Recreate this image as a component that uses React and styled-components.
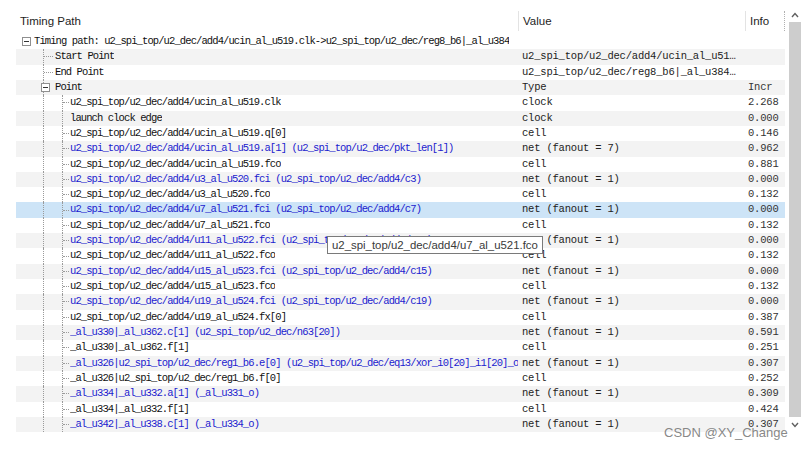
import React from "react";
import styled, { createGlobalStyle } from "styled-components";

const GlobalStyle = createGlobalStyle`
  html, body {
    margin: 0;
    background: #ffffff;
  }
`;

const ROW_H = 15.32;

const Page = styled.div`
  position: relative;
  width: 807px;
  height: 451px;
  padding: 7px 0 0 16px;
  box-sizing: border-box;
  display: flex;
  align-items: flex-start;
`;

const Table = styled.div`
  width: 769px;
  display: flex;
  flex-direction: column;
`;

const HeaderRow = styled.div`
  display: grid;
  grid-template-columns: 502px 227px 40px;
  height: 27px;
  align-items: center;
  font-family: "Liberation Sans", Arial, sans-serif;
  font-size: 11.5px;
  color: #1e1e1e;
`;

const HeaderCell = styled.div`
  height: 20px;
  display: flex;
  align-items: center;
  padding-left: 4px;
  border-left: ${(p) => (p.$first ? "none" : "1px solid #e3e3e3")};
  border-right: ${(p) => (p.$last ? "1px dotted #b0b0b0" : "none")};
  box-sizing: border-box;
`;

const Row = styled.div`
  display: grid;
  grid-template-columns: 502px 227px 40px;
  height: ${ROW_H}px;
  background: ${(p) =>
    p.$selected ? "#cde4f7" : p.$striped ? "#f3f3f3" : "#ffffff"};
  font-family: "Liberation Mono", "Courier New", monospace;
  font-size: 10.5px;
  line-height: ${ROW_H}px;
`;

const TreeCell = styled.div`
  display: flex;
  align-items: stretch;
  overflow: hidden;
  white-space: nowrap;
  padding-left: ${(p) => p.$pad || 0}px;
`;

const Lane = styled.span`
  flex: 0 0 ${(p) => p.$w}px;
  box-sizing: border-box;
  border-right: 1px dotted #9a9a9a;
`;

const Branch = styled.span`
  flex: 0 0 ${(p) => p.$w}px;
  align-self: center;
  height: 0;
  border-top: ${(p) => (p.$hidden ? "none" : "1px dotted #9a9a9a")};
`;

const Expander = styled.span`
  flex: 0 0 9px;
  height: 9px;
  align-self: center;
  box-sizing: border-box;
  border: 1px solid #8f8f8f;
  background: #ffffff;
  margin-left: ${(p) => p.$ml || 0}px;
  display: flex;
  align-items: center;
  justify-content: center;
  &::after {
    content: "";
    width: 5px;
    height: 1px;
    background: #333;
  }
`;

const Label = styled.span`
  margin-left: ${(p) => p.$ml}px;
  letter-spacing: -0.9px;
  color: ${(p) => (p.$blue ? "#1b1bcf" : "#111111")};
  overflow: hidden;
`;

const ValueCell = styled.div`
  padding-left: 4px;
  letter-spacing: -0.2px;
  color: #222222;
  overflow: hidden;
  white-space: nowrap;
`;

const InfoCell = styled.div`
  padding-left: 3px;
  letter-spacing: -0.2px;
  color: #333;
  overflow: hidden;
  white-space: nowrap;
`;

const ScrollTrack = styled.div`
  width: 16px;
  height: 425px;
  display: flex;
  flex-direction: column;
  align-items: center;
`;

const ScrollArrow = styled.div`
  height: 15px;
  width: 100%;
  display: flex;
  align-items: center;
  justify-content: center;
  padding-left: 4px;
  box-sizing: border-box;
`;

const Thumb = styled.div`
  flex: 1;
  width: 12px;
  margin-left: 4px;
  background: #cdcdcd;
`;

const Tooltip = styled.div`
  position: absolute;
  left: 327px;
  top: 236px;
  height: 16px;
  padding: 0 4px;
  border: 1px solid #7a7a7a;
  background: #ffffff;
  font-family: "Liberation Sans", Arial, sans-serif;
  font-size: 11.4px;
  line-height: 16px;
  color: #3a3a3a;
  white-space: nowrap;
`;

const Watermark = styled.div`
  position: absolute;
  left: 664px;
  top: 425px;
  font-family: "Liberation Sans", Arial, sans-serif;
  font-size: 13px;
  color: rgba(105, 105, 105, 0.8);
  white-space: nowrap;
`;

const rows = [
  { kind: "root", name: "Timing path: u2_spi_top/u2_dec/add4/ucin_al_u519.clk->u2_spi_top/u2_dec/reg8_b6|_al_u384" },
  { kind: "leaf1", name: "Start Point", value: "u2_spi_top/u2_dec/add4/ucin_al_u51…" },
  { kind: "leaf1", name: "End Point", value: "u2_spi_top/u2_dec/reg8_b6|_al_u384…" },
  { kind: "point", name: "Point", value: "Type", info: "Incr" },
  { name: "u2_spi_top/u2_dec/add4/ucin_al_u519.clk", value: "clock", info: "2.268" },
  { name: "launch clock edge", value: "clock", info: "0.000", noBranch: true },
  { name: "u2_spi_top/u2_dec/add4/ucin_al_u519.q[0]", value: "cell", info: "0.146" },
  { name: "u2_spi_top/u2_dec/add4/ucin_al_u519.a[1] (u2_spi_top/u2_dec/pkt_len[1])", value: "net (fanout = 7)", info: "0.962", blue: true },
  { name: "u2_spi_top/u2_dec/add4/ucin_al_u519.fco", value: "cell", info: "0.881" },
  { name: "u2_spi_top/u2_dec/add4/u3_al_u520.fci (u2_spi_top/u2_dec/add4/c3)", value: "net (fanout = 1)", info: "0.000", blue: true },
  { name: "u2_spi_top/u2_dec/add4/u3_al_u520.fco", value: "cell", info: "0.132" },
  { name: "u2_spi_top/u2_dec/add4/u7_al_u521.fci (u2_spi_top/u2_dec/add4/c7)", value: "net (fanout = 1)", info: "0.000", blue: true, selected: true },
  { name: "u2_spi_top/u2_dec/add4/u7_al_u521.fco", value: "cell", info: "0.132" },
  { name: "u2_spi_top/u2_dec/add4/u11_al_u522.fci (u2_spi_top/u2_dec/add4/c11)", value: "net (fanout = 1)", info: "0.000", blue: true },
  { name: "u2_spi_top/u2_dec/add4/u11_al_u522.fco", value: "cell", info: "0.132" },
  { name: "u2_spi_top/u2_dec/add4/u15_al_u523.fci (u2_spi_top/u2_dec/add4/c15)", value: "net (fanout = 1)", info: "0.000", blue: true },
  { name: "u2_spi_top/u2_dec/add4/u15_al_u523.fco", value: "cell", info: "0.132" },
  { name: "u2_spi_top/u2_dec/add4/u19_al_u524.fci (u2_spi_top/u2_dec/add4/c19)", value: "net (fanout = 1)", info: "0.000", blue: true },
  { name: "u2_spi_top/u2_dec/add4/u19_al_u524.fx[0]", value: "cell", info: "0.387" },
  { name: "_al_u330|_al_u362.c[1] (u2_spi_top/u2_dec/n63[20])", value: "net (fanout = 1)", info: "0.591", blue: true },
  { name: "_al_u330|_al_u362.f[1]", value: "cell", info: "0.251" },
  { name: "_al_u326|u2_spi_top/u2_dec/reg1_b6.e[0] (u2_spi_top/u2_dec/eq13/xor_i0[20]_i1[20]_o)", value: "net (fanout = 1)", info: "0.307", blue: true },
  { name: "_al_u326|u2_spi_top/u2_dec/reg1_b6.f[0]", value: "cell", info: "0.252" },
  { name: "_al_u334|_al_u332.a[1] (_al_u331_o)", value: "net (fanout = 1)", info: "0.309", blue: true },
  { name: "_al_u334|_al_u332.f[1]", value: "cell", info: "0.424" },
  { name: "_al_u342|_al_u338.c[1] (_al_u334_o)", value: "net (fanout = 1)", info: "0.307", blue: true },
];

const Tree = ({ row }) => {
  if (row.kind === "root") {
    return (
      <TreeCell $pad={6}>
        <Expander />
        <Label $ml={3}>{row.name}</Label>
      </TreeCell>
    );
  }
  if (row.kind === "leaf1") {
    return (
      <TreeCell>
        <Lane $w={28} />
        <Branch $w={9} />
        <Label $ml={2}>{row.name}</Label>
      </TreeCell>
    );
  }
  if (row.kind === "point") {
    return (
      <TreeCell>
        <Lane $w={28} />
        <Expander $ml={-3} />
        <Label $ml={5}>{row.name}</Label>
      </TreeCell>
    );
  }
  return (
    <TreeCell>
      <Lane $w={28} />
      <Lane $w={19} />
      <Branch $w={6} $hidden={row.noBranch} />
      <Label $ml={1} $blue={row.blue}>{row.name}</Label>
    </TreeCell>
  );
};

const Chevron = ({ up }) => (
  <svg width="8" height="6" viewBox="0 0 8 6">
    <path
      d={up ? "M1 5 L4 1.5 L7 5" : "M1 1 L4 4.5 L7 1"}
      fill="none"
      stroke="#606060"
      strokeWidth="1.4"
    />
  </svg>
);

const App = () => {
  return (
    <>
      <GlobalStyle />
      <Page>
        <Table>
          <HeaderRow>
            <HeaderCell $first>Timing Path</HeaderCell>
            <HeaderCell>Value</HeaderCell>
            <HeaderCell $last>Info</HeaderCell>
          </HeaderRow>
          {rows.map((row, i) => (
            <Row key={i} $striped={i % 2 === 1} $selected={row.selected}>
              <Tree row={row} />
              <ValueCell>{row.value || ""}</ValueCell>
              <InfoCell>{row.info || ""}</InfoCell>
            </Row>
          ))}
        </Table>
        <ScrollTrack>
          <ScrollArrow>
            <Chevron up />
          </ScrollArrow>
          <Thumb />
          <ScrollArrow>
            <Chevron />
          </ScrollArrow>
        </ScrollTrack>
        <Tooltip>u2_spi_top/u2_dec/add4/u7_al_u521.fco</Tooltip>
        <Watermark>CSDN @XY_Change</Watermark>
      </Page>
    </>
  );
};

export default App;
